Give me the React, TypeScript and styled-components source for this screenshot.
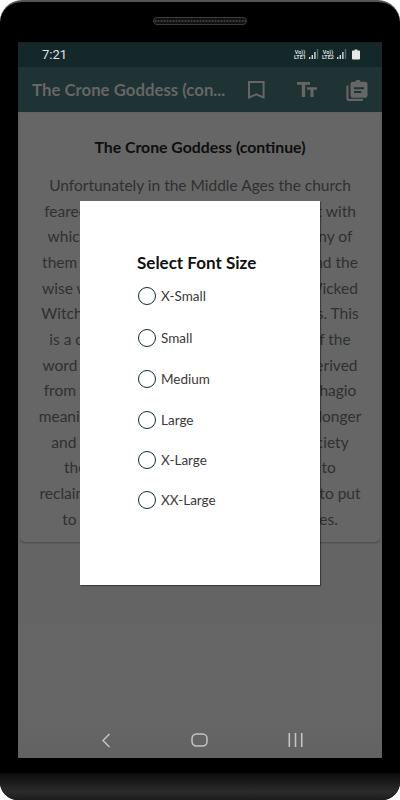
import React from 'react';
import styled, { createGlobalStyle } from 'styled-components';

const GlobalStyle = createGlobalStyle`
  html, body {
    margin: 0;
    padding: 0;
    background: #fff;
  }
  * {
    box-sizing: border-box;
  }
`;

const storyLines = [
  'Unfortunately in the Middle Ages the church',
  "feared the old women's power and met it with",
  'which the women spoke and burned many of',
  'them at the stake as healers, midwives and the',
  'wise women were later all painted as a Wicked',
  'Witches of all our fearful tales and stories. This',
  'is a corruption of the original meaning of the',
  'word hag as well, which is said to have derived',
  'from an ancient Greek language word of hagio',
  'meaning holy. The Crone is sadly now no longer',
  'and the wise elder is now lost to our society',
  'the time is come for us women at last to',
  'reclaim the Crone as her true power, and to put',
  'to rest the old and wicked Crone images.',
];

const sizes = [
  { label: 'X-Small', gap: 0 },
  { label: 'Small', gap: 22 },
  { label: 'Medium', gap: 21 },
  { label: 'Large', gap: 21 },
  { label: 'X-Large', gap: 20 },
  { label: 'XX-Large', gap: 20 },
];

const App = () => {
  return (
    <Phone>
      <GlobalStyle />
      <Earpiece />
      <Screen>
        <StatusBar>
          <Clock>7:21</Clock>
          <StatusIcons>
            <SimSignal name="LTE1" />
            <SimSignal name="LTE2" />
            <svg width="8" height="11" viewBox="0 0 9 11">
              <path d="M3 0h3v1h2a1 1 0 0 1 1 1v8a1 1 0 0 1-1 1H1a1 1 0 0 1-1-1V2a1 1 0 0 1 1-1h2z" fill="#e4e8e8" />
            </svg>
          </StatusIcons>
        </StatusBar>
        <AppBar>
          <AppTitle>The Crone Goddess (con...</AppTitle>
          <AppActions>
            <svg width="20" height="18" viewBox="0 0 20 18" fill="none">
              <path d="M1 1h14.6v15.4L8.3 13.4 1 16.4z" stroke="#666" strokeWidth="2" />
            </svg>
            <svg width="20" height="15" viewBox="0 0 20 15" fill="#666">
              <path d="M0 0h13v2.8H8.2V15H4.8V2.8H0z" />
              <path d="M10 5.2h10v2.5h-3.5V15h-3V7.7H10z" />
            </svg>
            <svg width="22" height="22" viewBox="0 0 23 24" fill="#666">
              <path d="M0 7h2.2v14.6H18V24H2.3A2.3 2.3 0 0 1 0 21.7z" />
              <path fillRule="evenodd" d="M7 3h2.6a3 3 0 0 1 5.8 0H20a3 3 0 0 1 3 3v12a2.4 2.4 0 0 1-2.4 2.4H7A2.6 2.6 0 0 1 4.4 18V5.6A2.6 2.6 0 0 1 7 3zm1.2 6v2.2h11V9zm0 4v2.2h8V13z" />
            </svg>
          </AppActions>
        </AppBar>
        <Content>
          <Card>
            <CardTitle>The Crone Goddess (continue)</CardTitle>
            {storyLines.map((line) => (
              <StoryLine key={line}>{line}</StoryLine>
            ))}
          </Card>
        </Content>
        <NavBar>
          <svg width="10" height="15" viewBox="0 0 10 15" fill="none">
            <path d="M8.5 1 2 7.5 8.5 14" stroke="#c4c4c4" strokeWidth="1.5" />
          </svg>
          <svg width="17" height="14" viewBox="0 0 17 14" fill="none">
            <rect x="1" y="1" width="15" height="12" rx="4.5" stroke="#c4c4c4" strokeWidth="1.5" />
          </svg>
          <svg width="15" height="14" viewBox="0 0 15 14" fill="#c4c4c4">
            <rect x="0.5" width="1.6" height="14" />
            <rect x="6.7" width="1.6" height="14" />
            <rect x="12.9" width="1.6" height="14" />
          </svg>
        </NavBar>
        <Dialog>
          <DialogTitle>Select Font Size</DialogTitle>
          {sizes.map((size) => (
            <SizeRow key={size.label} $gap={size.gap}>
              <Radio />
              <SizeLabel>{size.label}</SizeLabel>
            </SizeRow>
          ))}
        </Dialog>
      </Screen>
      <Chin />
    </Phone>
  );
};

const SimSignal = ({ name }: { name: string }) => (
  <Sim>
    <SimText>
      <span>Vo))</span>
      <span>{name}</span>
    </SimText>
    <svg width="10" height="11" viewBox="0 0 10 11" fill="#d8dcdc">
      <rect x="0" y="8" width="1.4" height="2" />
      <rect x="2.6" y="6" width="1.4" height="4" />
      <rect x="5.2" y="3" width="1.4" height="7" />
      <rect x="7.8" y="0" width="1.4" height="10" fill="#5a6a6a" />
    </svg>
  </Sim>
);

export default App;

/* Styled Components */
const Phone = styled.div`
  width: 400px;
  height: 800px;
  background: #000;
  border-radius: 22px 22px 18px 18px;
  border-top: 2px solid #555;
  overflow: hidden;
  display: flex;
  flex-direction: column;
  align-items: center;
  font-family: Lato, sans-serif;
`;

const Earpiece = styled.div`
  width: 94px;
  height: 8px;
  margin-top: 15px;
  border-radius: 4px;
  border: 1px solid #3c3c3c;
  background: #111 radial-gradient(circle, #3a3a3a 1px, transparent 1.2px) 0 0 / 3px 6px;
`;

const Screen = styled.div`
  position: relative;
  width: 364px;
  height: 716px;
  margin-top: 17px;
  display: flex;
  flex-direction: column;
  background: #666;
`;

const StatusBar = styled.div`
  height: 25px;
  padding: 0 22px 0 24px;
  background: #14282a;
  display: flex;
  align-items: center;
  justify-content: space-between;
`;

const Clock = styled.span`
  font: 400 13px Roboto, sans-serif;
  color: #dfe3e3;
`;

const StatusIcons = styled.div`
  display: flex;
  align-items: center;
  gap: 5px;
`;

const Sim = styled.div`
  display: flex;
  align-items: center;
  gap: 2px;
  & + & {
    margin-left: -3px;
  }
`;

const SimText = styled.div`
  width: 14px;
  display: flex;
  flex-direction: column;
  align-items: center;
  font: 700 5.5px/5px Roboto, sans-serif;
  color: #d8dcdc;
`;

const AppBar = styled.div`
  height: 45px;
  padding: 0 14px;
  background: #1f3234;
  display: flex;
  align-items: center;
  justify-content: space-between;
`;

const AppTitle = styled.div`
  font-size: 16.8px;
  font-weight: 700;
  color: #666;
  white-space: nowrap;
`;

const AppActions = styled.div`
  display: flex;
  align-items: center;
  gap: 29px;
`;

const Content = styled.div`
  flex: 1;
  padding: 1px 2px 0;
  background: linear-gradient(#646464 513px, #666 513px);
`;

const Card = styled.div`
  height: 429px;
  padding: 24px 0 0;
  background: #666;
  border-radius: 0 0 5px 5px;
  box-shadow: 0 1px 2px rgba(0, 0, 0, 0.25);
  text-align: center;
`;

const CardTitle = styled.div`
  font-size: 15.8px;
  font-weight: 700;
  line-height: 20px;
  color: #0e0e0e;
  margin-bottom: 16px;
`;

const StoryLine = styled.div`
  font-size: 15.5px;
  line-height: 25.65px;
  color: #303030;
  white-space: nowrap;
`;

const NavBar = styled.div`
  height: 38px;
  padding: 2px 79px 0 83px;
  background: linear-gradient(#666, #626262);
  display: flex;
  align-items: center;
  justify-content: space-between;
`;

const Dialog = styled.div`
  position: absolute;
  left: 62px;
  top: 159px;
  width: 240px;
  height: 384px;
  padding: 51px 0 0 57px;
  background: #fff;
  box-shadow: 1px 1px 1px rgba(0, 0, 0, 0.4);
`;

const DialogTitle = styled.div`
  font-size: 17px;
  font-weight: 700;
  line-height: 21px;
  color: #111;
  margin-bottom: 13px;
`;

const SizeRow = styled.div<{ $gap: number }>`
  display: flex;
  align-items: center;
  gap: 5px;
  height: 20px;
  margin-top: ${(p) => p.$gap}px;
`;

const Radio = styled.span`
  width: 18px;
  height: 18px;
  margin-left: 1px;
  border-radius: 50%;
  border: 1.8px solid #0f2a2f;
`;

const SizeLabel = styled.span`
  font-size: 13.5px;
  color: #3a3a3a;
`;

const Chin = styled.div`
  width: 100%;
  flex: 1;
  margin-top: 15px;
  background: linear-gradient(#0c0c0c, #2b2b2b 70%, #1c1c1c);
`;
